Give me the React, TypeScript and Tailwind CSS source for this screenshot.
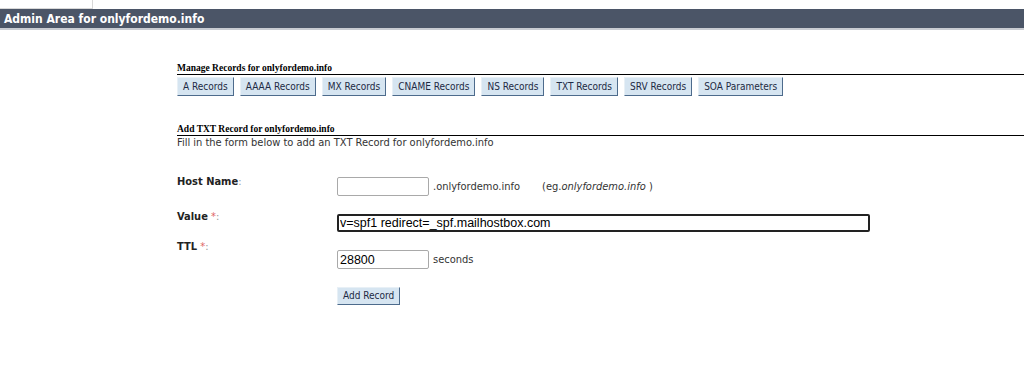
import React from 'react'

const tabs = ['A Records', 'AAAA Records', 'MX Records', 'CNAME Records', 'NS Records', 'TXT Records', 'SRV Records', 'SOA Parameters']

const ui = "font-['DejaVu_Sans_Condensed','DejaVu_Sans',sans-serif]"
const serif = "font-['Liberation_Serif',serif]"
const field = "font-['Liberation_Sans',Arial,sans-serif]"
const btn = `${ui} px-[5px] text-[10px] leading-none text-[#1d2a44] bg-[#d6e5f1] border border-t-[#e8f0f6] border-l-[#e8f0f6] border-r-[#4d6b8c] border-b-[#4d6b8c]`

const Label = ({ text, req }: { text: string; req?: boolean }) => (
  <div className={`${ui} w-[160px] pt-[1px] text-[11px] leading-[13px] font-bold text-[#222]`}>
    {text}
    {req && <span className="font-normal text-[#e06666]"> *</span>}
    <span className="font-normal text-[#999]">:</span>
  </div>
)

const App = () => {
  return (
    <div className="w-[1024px] h-[376px] bg-white overflow-hidden">
      {/* little box up in the corner */}
      <div className="w-[93px] h-[9px] border-r border-b border-[#d8d8d8]" />

      {/* header bar */}
      <div className="h-[21px] bg-[#4b5567] border-b-2 border-[#c9ccd2] pl-[4px] flex items-center">
        <span className={`${ui} text-[12px] font-bold text-white leading-none`}>Admin Area for onlyfordemo.info</span>
      </div>

      <div className="pl-[177px] pt-[33px]">
        <div className={`${serif} text-[9.5px] font-bold text-black leading-[10px] border-b border-black pb-[1px]`}>
          Manage Records for onlyfordemo.info
        </div>
        <div className="flex gap-[6px] mt-[2px]">
          {tabs.map((t) => (
            <button key={t} className={`${btn} h-[19px]`}>
              {t}
            </button>
          ))}
        </div>

        <div className={`${serif} text-[9.5px] font-bold text-black leading-[10px] border-b border-black pb-[1px] mt-[28px]`}>
          Add TXT Record for onlyfordemo.info
        </div>
        <div className={`${ui} text-[11px] text-[#333] leading-[13px]`}>
          Fill in the form below to add an TXT Record for onlyfordemo.info
        </div>

        {/* form rows */}
        <div className="flex items-start mt-[25px]">
          <Label text="Host Name" />
          <div className={`${ui} flex items-center text-[11px] leading-[13px] text-[#333] mt-[3px]`}>
            <input className="w-[92px] h-[19px] border border-[#a9a9a9] rounded-[2px] bg-white" />
            <span className="ml-[4px]">.onlyfordemo.info</span>
            <span className="ml-[22px]">
              (eg.<i>onlyfordemo.info</i> )
            </span>
          </div>
        </div>

        <div className="flex items-start mt-[13px]">
          <Label text="Value" req />
          <input
            defaultValue="v=spf1 redirect=_spf.mailhostbox.com"
            className={`${field} mt-[5px] w-[533px] h-[18px] border-2 border-[#222] rounded-[2px] px-[1px] text-[12.5px] text-black outline-none`}
          />
        </div>

        <div className="flex items-start mt-[7px]">
          <Label text="TTL" req />
          <div className={`${ui} flex items-center text-[11px] leading-[13px] text-[#333] mt-[11px]`}>
            <input
              defaultValue="28800"
              className={`${field} w-[92px] h-[19px] border border-[#a9a9a9] rounded-[2px] px-[2px] text-[12.5px] text-black`}
            />
            <span className="ml-[4px]">seconds</span>
          </div>
        </div>

        <div className="flex pl-[160px] mt-[18px]">
          <button className={`${btn} h-[18px]`}>Add Record</button>
        </div>
      </div>
    </div>
  )
}

export default App
